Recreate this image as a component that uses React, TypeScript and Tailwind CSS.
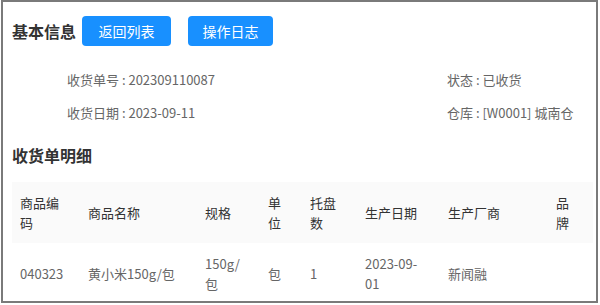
import React from "react";

const cols = [
  { label: "商品编码", w: "w-[68px]" },
  { label: "商品名称", w: "w-[117px]" },
  { label: "规格", w: "w-[63px]" },
  { label: "单位", w: "w-[42px]" },
  { label: "托盘数", w: "w-[55px]" },
  { label: "生产日期", w: "w-[83px]" },
  { label: "生产厂商", w: "w-[108px]" },
  { label: "品牌", w: "w-[45px]" },
];

const row = ["040323", "黄小米150g/包", "150g/包", "包", "1", "2023-09-01", "新闻融", ""];

export default function App() {
  return (
    <div
      className="w-[600px] h-[305px] bg-white overflow-hidden"
      style={{ fontFamily: '"Noto Sans CJK SC", "Noto Sans", sans-serif' }}
    >
      <div className="ml-px w-[597px] h-[303px] border-2 border-[#7a7a7a] overflow-hidden pl-[9px] pt-[14px]">
        <div className="flex items-center h-[30px]">
          <div className="text-[16px] font-bold text-[#333] leading-[24px]">基本信息</div>
          <button className="ml-[6px] w-[89px] h-[30px] rounded-[4px] bg-[#1890ff] text-white text-[14px]">
            返回列表
          </button>
          <button className="ml-[17px] w-[85px] h-[30px] rounded-[4px] bg-[#1890ff] text-white text-[14px]">
            操作日志
          </button>
        </div>
        <div className="mt-[24px] flex flex-col gap-[13px] text-[13px] leading-[20px] text-[#666]">
          <div className="flex">
            <div className="pl-[55px] w-[435px]">收货单号 : 202309110087</div>
            <div>状态 : 已收货</div>
          </div>
          <div className="flex">
            <div className="pl-[55px] w-[435px]">收货日期 : 2023-09-11</div>
            <div>仓库 : [W0001] 城南仓</div>
          </div>
        </div>
        <div className="mt-[20px] text-[16px] font-bold text-[#333] leading-[24px]">收货单明细</div>
        <div className="mt-[15px] w-[581px]">
          <table className="table-fixed border-collapse w-[581px] text-[13px] leading-[20px]">
            <thead>
              <tr className="bg-[#fafafa] h-[61px]">
                {cols.map((c) => (
                  <th key={c.label} className={`${c.w} pl-2 pr-3 text-left font-normal text-[#333] align-middle`}>
                    {c.label}
                  </th>
                ))}
              </tr>
            </thead>
            <tbody>
              <tr className="h-[61px]">
                {row.map((v, i) => (
                  <td key={i} className="pl-2 pr-3 text-left text-[#666] align-middle">
                    {v}
                  </td>
                ))}
              </tr>
            </tbody>
          </table>
        </div>
      </div>
    </div>
  );
}
